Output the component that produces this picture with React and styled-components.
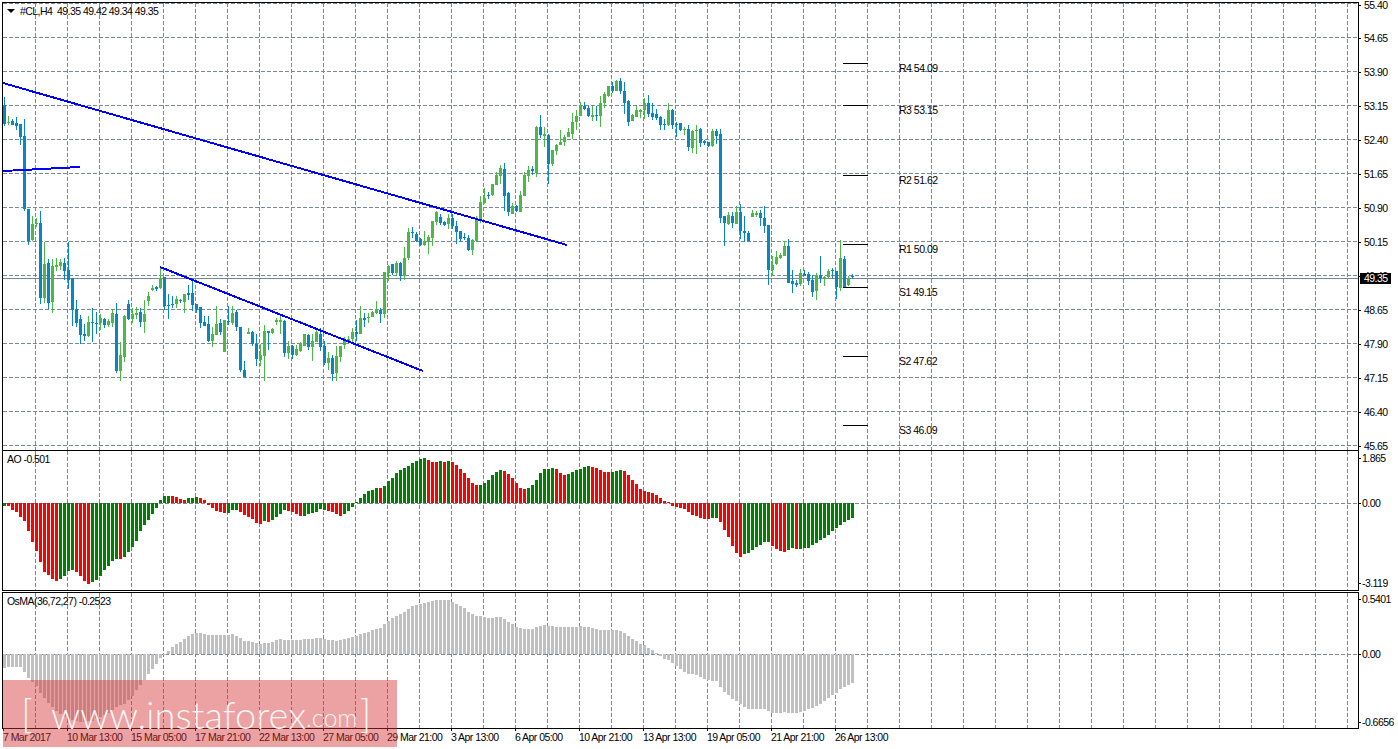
import React from "react";
import styled, { createGlobalStyle } from "styled-components";

// pixel rows read off the chart: [high, bodyTop, bodyBottom, low, up]
const CANDLES = [
  [97,105,124,126,0],[116,122,123,125,1],[119,121,125,125,0],[117,123,126,130,0],[124,124,137,145,0],
  [119,136,209,211,0],[209,209,241,245,0],[216,224,240,241,1],[218,223,224,227,1],[211,223,298,304,0],
  [242,264,298,303,1],[259,263,303,309,0],[259,266,302,313,1],[258,265,267,271,1],[259,262,266,270,1],
  [258,263,271,280,0],[242,270,280,289,0],[278,278,310,326,0],[300,309,323,327,0],[315,319,335,344,0],
  [324,334,336,341,0],[316,322,336,337,1],[308,322,323,342,0],[312,323,324,334,0],[314,318,323,330,1],
  [318,319,325,328,0],[319,321,325,327,1],[310,313,323,327,1],[303,314,371,373,0],[342,355,371,381,1],
  [315,316,357,362,1],[300,304,319,320,0],[308,314,319,323,1],[307,313,315,319,1],[308,312,322,327,0],
  [300,314,322,333,1],[292,296,301,306,1],[285,288,290,291,1],[286,287,289,291,0],[266,278,288,289,1],
  [277,277,306,310,0],[294,305,306,319,0],[296,304,305,308,0],[296,299,304,308,1],[299,300,301,303,0],
  [294,294,302,313,1],[285,293,295,300,0],[278,293,305,311,0],[304,304,309,313,0],[307,307,323,328,0],
  [316,322,326,326,0],[316,324,341,342,0],[327,334,341,347,1],[306,324,335,335,1],[319,323,332,335,0],
  [320,320,352,352,1],[306,321,322,325,0],[306,313,323,325,1],[310,312,327,331,0],[327,327,370,372,0],
  [361,370,377,377,0],[328,332,334,334,1],[331,332,344,346,0],[334,344,359,366,0],[344,355,360,366,1],
  [325,331,356,381,1],[331,331,333,350,0],[328,329,333,334,1],[318,320,322,325,1],[314,320,322,334,1],
  [320,321,353,357,0],[341,346,353,359,1],[345,346,355,359,0],[345,349,355,356,1],[342,343,351,352,1],
  [334,334,346,346,1],[334,335,347,350,0],[334,341,347,361,1],[330,332,342,342,1],[328,334,347,351,0],
  [341,346,363,365,0],[352,358,363,370,1],[355,358,374,381,0],[346,356,373,381,1],[346,346,357,362,1],
  [337,341,345,349,1],[336,339,342,343,1],[328,332,339,344,1],[320,332,334,341,0],[306,318,334,334,1],
  [313,318,320,327,0],[313,317,318,323,1],[311,312,317,317,1],[301,310,313,314,1],[308,310,314,323,0],
  [272,272,314,318,1],[265,266,273,281,1],[264,264,273,275,0],[261,263,273,276,1],[262,263,276,281,0],
  [247,258,276,280,1],[228,232,258,260,1],[227,232,233,238,0],[232,234,241,242,0],[238,239,245,246,0],
  [231,241,245,246,1],[235,237,242,254,1],[221,221,238,246,1],[211,212,222,225,1],[214,217,223,225,0],
  [221,222,225,226,0],[214,218,224,229,1],[214,218,226,229,0],[221,226,232,244,0],[231,231,239,242,0],
  [233,237,238,240,0],[235,238,250,251,0],[239,240,250,255,1],[216,219,241,242,1],[196,202,220,223,1],
  [188,198,203,204,1],[192,195,196,199,0],[184,184,195,196,1],[172,175,185,185,1],[165,168,176,184,1],
  [163,169,196,211,0],[192,193,212,216,0],[203,206,214,214,1],[205,206,211,212,0],[191,195,212,212,1],
  [172,175,196,196,1],[166,170,176,182,1],[166,169,171,175,0],[126,127,173,177,1],[115,127,135,138,0],
  [127,134,136,147,1],[134,135,164,184,0],[150,150,164,166,1],[144,145,151,155,1],[130,142,145,145,1],
  [135,137,142,146,1],[128,132,137,137,1],[113,122,134,139,1],[110,116,122,130,1],[102,106,116,116,1],
  [102,106,109,110,0],[106,108,116,117,0],[106,115,117,121,1],[106,115,116,121,0],[96,103,116,127,1],
  [92,94,103,108,1],[86,86,96,97,1],[82,86,91,93,0],[80,81,91,91,1],[78,81,91,94,0],
  [82,91,103,114,0],[100,101,122,126,0],[114,115,121,121,1],[106,110,117,117,1],[109,110,112,118,1],
  [98,103,110,119,1],[95,103,114,117,0],[103,113,117,120,0],[109,114,118,120,0],[116,117,125,130,0],
  [119,124,125,130,0],[103,110,125,126,1],[109,110,125,129,0],[122,124,125,137,0],[123,123,130,131,0],
  [127,129,130,135,1],[125,129,147,151,0],[130,131,148,153,1],[125,130,131,154,1],[128,129,143,147,0],
  [140,141,143,145,0],[142,142,146,147,0],[129,131,146,147,1],[129,131,136,144,0],[129,134,218,223,0],
  [216,216,223,246,0],[212,215,224,225,1],[212,216,223,228,0],[206,212,224,224,1],[204,212,231,239,0],
  [216,231,233,242,0],[231,233,241,241,0],[210,213,217,217,1],[211,213,215,217,1],[210,213,218,226,0],
  [206,218,226,233,0],[225,225,270,285,0],[256,265,270,275,1],[251,257,264,265,1],[253,255,258,259,1],
  [241,246,256,256,1],[239,246,283,283,0],[270,281,284,293,0],[280,283,285,287,0],[269,273,284,286,1],
  [270,274,276,276,0],[272,274,281,285,0],[275,280,292,297,0],[273,275,291,300,1],[256,275,278,283,0],
  [276,277,278,286,1],[269,271,277,278,1],[268,270,271,278,0],[271,271,287,299,0],[240,258,288,291,1],
  [256,259,287,288,0],[276,278,285,286,1],[274,276,277,279,0],
];

const AO_VALUES = [
  -3,-3,-7,-9,-14,-18,-28,-39,-48,-59,-69,-72,-76,-78,-76,-73,-68,-67,-69,-73,-78,-81,-79,-77,-73,-67,-63,-58,-56,-56,
  -54,-49,-44,-38,-28,-22,-17,-11,-5,3,7,7,7,6,4,3,5,5,6,5,3,-2,-5,-8,-9,-10,-10,-7,-7,-9,
  -12,-14,-16,-20,-21,-18,-19,-17,-14,-11,-7,-8,-9,-11,-13,-13,-11,-10,-9,-6,-7,-8,-9,-11,-13,-11,-8,-4,1,5,
  9,12,13,15,15,17,22,25,30,33,35,37,40,42,44,45,43,41,41,42,41,42,41,38,34,30,25,20,18,18,
  20,23,28,31,33,32,29,25,20,15,14,15,18,23,30,34,34,35,34,30,28,29,31,33,34,36,37,36,35,33,
  31,31,31,32,33,32,28,23,19,14,12,11,10,8,5,2,1,-3,-4,-5,-6,-9,-12,-13,-15,-16,-16,-15,-15,-19,
  -27,-34,-43,-50,-54,-51,-50,-47,-44,-42,-39,-39,-43,-46,-48,-49,-47,-45,-46,-46,-45,-45,-42,-40,-37,-35,-32,-28,-25,-22,
  -19,-17,-15,
];

// colour runs of the AO bars, green first, then red, and so on
const AO_RUNS = [1,13,4,4,7,1,12,4,3,7,3,6,1,1,4,4,6,4,9,1,11,3,1,1,1,7,6,6,7,3,6,5,3,22,2,6,7,4,2,1,14];

const OSMA_VALUES = [
  -14,-13,-13,-13,-13,-18,-24,-28,-32,-39,-44,-49,-53,-57,-60,-63,-65,-66,-67,-68,-68,-67,-67,-64,-63,-61,-59,-56,-53,-51,
  -50,-46,-42,-36,-31,-26,-20,-15,-10,-4,-1,3,7,10,12,15,18,20,21,21,20,19,19,19,19,19,19,20,18,16,
  13,13,12,11,10,11,11,12,14,15,14,14,14,14,14,15,15,15,16,16,15,14,14,13,14,15,16,17,18,20,
  21,22,24,25,26,30,33,36,38,40,42,45,48,49,50,51,52,53,54,54,54,54,52,50,48,46,42,40,38,38,
  37,36,36,37,37,35,32,30,27,26,25,25,25,27,28,29,28,28,27,27,27,27,27,27,28,27,27,26,25,24,
  24,24,24,24,23,21,18,15,13,10,9,6,4,1,-2,-5,-6,-9,-12,-15,-18,-20,-20,-21,-23,-25,-26,-27,-27,-33,
  -38,-41,-45,-47,-50,-53,-55,-55,-55,-55,-55,-57,-59,-59,-59,-58,-59,-59,-59,-58,-57,-55,-54,-52,-50,-47,-44,-41,-39,-35,
  -33,-31,-29,
];

const MAIN_PRICES = ["55.40","54.65","53.90","53.15","52.40","51.65","50.90","50.15","49.40","48.65","47.90","47.15","46.40","45.65"];
const DATES = ["7 Mar 2017","10 Mar 13:00","15 Mar 05:00","17 Mar 21:00","22 Mar 13:00","27 Mar 05:00","29 Mar 21:00","3 Apr 13:00","6 Apr 05:00","10 Apr 21:00","13 Apr 13:00","19 Apr 05:00","21 Apr 21:00","26 Apr 13:00"];
const PIVOTS = [
  { y: 63, label: "R4 54.09" },
  { y: 105, label: "R3 53.15" },
  { y: 175, label: "R2 51.62" },
  { y: 244, label: "R1 50.09" },
  { y: 287, label: "S1 49.15" },
  { y: 356, label: "S2 47.62" },
  { y: 425, label: "S3 46.09" },
];
const TREND_LINES = [
  [3, 83, 567, 245],
  [160, 267, 423, 371],
  [3, 171, 80, 167],
];
const V_LINES = Array.from({ length: 42 }, (_, i) => 35 + 32 * i);
const H_LINES = Array.from({ length: 13 }, (_, i) => 37 + 34 * i);

const GlobalStyle = createGlobalStyle`
  html, body {
    margin: 0;
    background: #ffffff;
    overflow: hidden;
  }
  * { box-sizing: border-box; }
`;

const Terminal = styled.div`
  position: relative;
  width: 1398px;
  height: 749px;
  padding: 2px 0 0 2px;
  overflow: hidden;
  background: #ffffff;
  color: #000000;
  font-family: "Liberation Sans", Arial, sans-serif;
  font-size: 10.5px;
  letter-spacing: -0.55px;
`;

const PaneRow = styled.div`
  display: flex;
  height: ${(p) => p.$height}px;
  margin-top: ${(p) => p.$gap || 0}px;
`;

const Plot = styled.div`
  position: relative;
  width: 1357px;
  border: 1px solid #000000;
  ${(p) => p.$open && "border-bottom: none;"}
`;

const PlotSvg = styled.svg`
  display: block;
`;

const GridLine = styled.line`
  stroke: #778899;
  stroke-width: 1;
  stroke-dasharray: 4 2;
  shape-rendering: crispEdges;
`;

const BidLine = styled.line`
  stroke: #778899;
  stroke-width: 1;
  shape-rendering: crispEdges;
`;

const TrendLine = styled.line`
  stroke: #0000ff;
  stroke-width: 2;
  shape-rendering: crispEdges;
`;

const PivotTick = styled.line`
  stroke: #000000;
  stroke-width: 1;
  shape-rendering: crispEdges;
`;

const PivotLabel = styled.text`
  font-family: "Liberation Sans", Arial, sans-serif;
  font-size: 10.5px;
  letter-spacing: -0.5px;
  fill: #000000;
`;

const Bar = styled.rect`
  shape-rendering: crispEdges;
`;

const Legend = styled.div`
  position: absolute;
  top: ${(p) => p.$top}px;
  left: ${(p) => p.$left}px;
  display: flex;
  align-items: center;
  white-space: pre;
  line-height: 12px;
`;

const DropMark = styled.span`
  width: 0;
  height: 0;
  margin-right: 5px;
  border-left: 4px solid transparent;
  border-right: 4px solid transparent;
  border-top: 4px solid #000000;
`;

const PriceScale = styled.div`
  position: relative;
  display: flex;
  flex-direction: column;
  width: 39px;
  margin-top: ${(p) => p.$offset || 0}px;
`;

const PriceLabel = styled.div`
  position: relative;
  display: flex;
  flex: 0 0 auto;
  align-items: center;
  height: ${(p) => p.$height}px;
  margin-top: ${(p) => p.$gap || 0}px;
  padding-left: ${(p) => p.$indent}px;
  line-height: 8px;

  &::before {
    content: "";
    position: absolute;
    left: 0;
    top: 50%;
    width: 2px;
    height: 1px;
    background: #000000;
  }
`;

const LastPrice = styled.div`
  position: absolute;
  top: 286px;
  left: 1px;
  width: 31px;
  height: 11px;
  padding-left: 4px;
  background: #000000;
  color: #ffffff;
  line-height: 11px;
`;

const TimeScale = styled.div`
  display: flex;
  padding-left: 1px;
`;

const TimeLabel = styled.div`
  position: relative;
  flex: 0 0 64px;
  height: 20px;
  padding-top: 3px;
  line-height: 10px;
  white-space: nowrap;

  &::before {
    content: "";
    position: absolute;
    left: 0;
    top: 0;
    width: 1px;
    height: 2px;
    background: #000000;
  }
`;

const Watermark = styled.div`
  position: absolute;
  left: 3px;
  top: 680px;
  display: flex;
  align-items: center;
  width: 394px;
  height: 67px;
  padding-left: 18px;
  background: rgba(212, 48, 48, 0.45);
  color: rgba(255, 255, 255, 0.92);
  font-family: Lato, "Open Sans", sans-serif;
  font-weight: 300;
  letter-spacing: 0;
  white-space: pre;
`;

const WatermarkBracket = styled.span`
  font-size: 40px;
  line-height: 40px;
  margin-top: -2px;
`;

const WatermarkSite = styled.span`
  margin-left: 18px;
  font-size: 38px;
  line-height: 50px;
`;

const WatermarkTld = styled.span`
  margin-right: 2px;
  font-size: 25px;
  line-height: 50px;
  margin-top: 6px;
`;

function Grid({ top, bottom, levels }) {
  return (
    <>
      {V_LINES.map((x) => (
        <GridLine key={x} x1={x + 0.5} x2={x + 0.5} y1={top} y2={bottom} />
      ))}
      {levels.map((y) => (
        <GridLine key={y} x1={3} x2={1358} y1={y + 0.5} y2={y + 0.5} />
      ))}
    </>
  );
}

function Candle({ index, data }) {
  const [high, top, bottom, low, up] = data;
  const color = up ? "#4cb848" : "#0a85c4";
  return (
    <>
      <Bar x={4 + index * 4} y={high} width={1} height={low - high} fill={color} />
      <Bar x={3 + index * 4} y={top} width={3} height={Math.max(1, bottom - top)} fill={color} />
    </>
  );
}

function MainChart() {
  return (
    <PlotSvg width={1355} height={447} viewBox="3 3 1355 447">
      <Grid top={3} bottom={450} levels={[3, ...H_LINES]} />
      <BidLine x1={3} x2={1358} y1={278.5} y2={278.5} />
      {CANDLES.map((c, i) => (
        <Candle key={i} index={i} data={c} />
      ))}
      {TREND_LINES.map((l) => (
        <TrendLine key={l.join()} x1={l[0]} y1={l[1]} x2={l[2]} y2={l[3]} />
      ))}
      {PIVOTS.map((p) => (
        <React.Fragment key={p.label}>
          <PivotTick x1={843} x2={868} y1={p.y + 0.5} y2={p.y + 0.5} />
          <PivotLabel x={899} y={p.y + 9}>{p.label}</PivotLabel>
        </React.Fragment>
      ))}
    </PlotSvg>
  );
}

function aoColors() {
  const colors = [];
  AO_RUNS.forEach((run, r) => {
    for (let n = 0; n < run; n++) colors.push(r % 2 === 0 ? "#008000" : "#ff0000");
  });
  return colors;
}

function Histogram({ top, height, zero, values, colors }) {
  return (
    <PlotSvg width={1355} height={height} viewBox={`3 ${top} 1355 ${height}`}>
      <Grid top={top} bottom={top + height} levels={[zero]} />
      {values.map((v, i) => (
        <Bar
          key={i}
          x={3 + i * 4}
          y={v > 0 ? zero - v : zero}
          width={3}
          height={Math.abs(v)}
          fill={colors ? colors[i] : "#c0c0c0"}
        />
      ))}
    </PlotSvg>
  );
}

export default function App() {
  const colors = aoColors();
  return (
    <Terminal>
      <GlobalStyle />

      <PaneRow $height={448}>
        <Plot $open>
          <MainChart />
          <Legend $top={2} $left={4}>
            <DropMark />
            #CL,H4  49.35 49.42 49.34 49.35
          </Legend>
        </Plot>
        <PriceScale $offset={-15}>
          {MAIN_PRICES.map((price, i) => (
            <PriceLabel key={price} $height={i === 0 ? 32 : 34} $gap={i === 0 ? 2 : 0} $indent={5}>{price}</PriceLabel>
          ))}
          <LastPrice>49.35</LastPrice>
        </PriceScale>
      </PaneRow>

      <PaneRow $height={141}>
        <Plot>
          <Histogram top={451} height={139} zero={503} values={AO_VALUES} colors={colors} />
          <Legend $top={2} $left={4}>AO -0.501</Legend>
        </Plot>
        <PriceScale>
          <PriceLabel $height={10} $gap={3} $indent={3}>1.865</PriceLabel>
          <PriceLabel $height={10} $gap={35} $indent={3}>0.00</PriceLabel>
          <PriceLabel $height={10} $gap={70} $indent={3}>-3.119</PriceLabel>
        </PriceScale>
      </PaneRow>

      <PaneRow $height={137} $gap={1}>
        <Plot>
          <Histogram top={593} height={135} zero={654} values={OSMA_VALUES} />
          <Legend $top={2} $left={4}>OsMA(36,72,27) -0.2523</Legend>
        </Plot>
        <PriceScale>
          <PriceLabel $height={10} $gap={2} $indent={3}>0.5401</PriceLabel>
          <PriceLabel $height={10} $gap={45} $indent={3}>0.00</PriceLabel>
          <PriceLabel $height={10} $gap={58} $indent={3}>-0.6656</PriceLabel>
        </PriceScale>
      </PaneRow>

      <TimeScale>
        {DATES.map((d) => (
          <TimeLabel key={d}>{d}</TimeLabel>
        ))}
      </TimeScale>

      <Watermark>
        <WatermarkBracket>[</WatermarkBracket>
        <WatermarkSite>www.instaforex</WatermarkSite>
        <WatermarkTld>.com</WatermarkTld>
        <WatermarkBracket>]</WatermarkBracket>
      </Watermark>
    </Terminal>
  );
}
